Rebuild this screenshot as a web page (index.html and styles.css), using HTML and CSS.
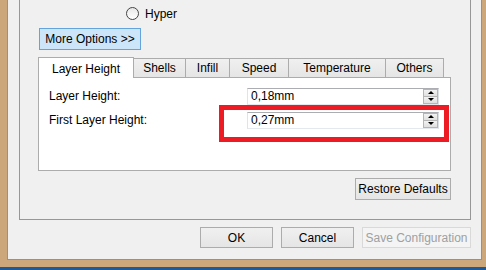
FILE: index.html
```html
<!DOCTYPE html>
<html>
<head>
<meta charset="utf-8">
<link rel="stylesheet" href="styles.css">
</head>
<body>
<div class="frame">
  <div class="client">
    <div class="group">
      <div class="radio-row">
        <span class="radio"></span>
        <span class="radio-label">Hyper</span>
      </div>
      <div class="more-row">
        <button class="btn btn-focus">More Options &gt;&gt;</button>
      </div>
      <div class="tabs">
        <div class="tab active w1">Layer Height</div>
        <div class="tab w2">Shells</div>
        <div class="tab w3">Infill</div>
        <div class="tab w4">Speed</div>
        <div class="tab w5">Temperature</div>
        <div class="tab w6">Others</div>
      </div>
      <div class="pane">
        <div class="form">
          <label class="lbl">Layer Height:</label>
          <div class="spin">
            <span class="val">0,18mm</span>
            <span class="spin-btns"><span class="sb up"></span><span class="sb down"></span></span>
          </div>
          <label class="lbl">First Layer Height:</label>
          <div class="spin">
            <span class="val">0,27mm</span>
            <span class="spin-btns"><span class="sb up"></span><span class="sb down"></span></span>
          </div>
        </div>
        <div class="highlight"></div>
      </div>
      <div class="restore-row">
        <button class="btn restore">Restore Defaults</button>
      </div>
    </div>
    <div class="actions">
      <button class="btn b-ok">OK</button>
      <button class="btn b-cancel">Cancel</button>
      <button class="btn b-save" disabled>Save Configuration</button>
    </div>
  </div>
</div>
</body>
</html>
```
FILE: styles.css
```css
* { box-sizing: border-box; }
html, body { margin: 0; padding: 0; }
body {
  width: 486px;
  height: 270px;
  background: #1c5a9a;
  font-family: "Liberation Sans", Arial, sans-serif;
  font-size: 12px;
  color: #000;
  overflow: hidden;
}
.frame {
  height: 267px;
  background: #cba77b;
  display: flex;
  padding: 0 4px 7px 7px;
}
.client {
  flex: 1;
  background: #f0f0f0;
  border: 1px solid #b08c60;
  border-top: none;
  padding: 0 10px 0 11px;
  display: flex;
  flex-direction: column;
}
.group {
  height: 220px;
  border: 1px solid #979797;
  border-top: none;
  padding: 7px 19px 0 18px;
  display: flex;
  flex-direction: column;
}
.radio-row {
  height: 13px;
  display: flex;
  align-items: center;
  margin-left: 88px;
}
.radio {
  width: 13px;
  height: 13px;
  border-radius: 50%;
  border: 1px solid #444;
  background: linear-gradient(#e8e8e8, #ffffff);
}
.radio-label {
  margin-left: 6px;
  line-height: 13px;
  position: relative;
  top: 1px;
}
.more-row {
  margin-top: 8px;
  height: 22px;
  display: flex;
}
.btn {
  font-family: "Liberation Sans", Arial, sans-serif;
  font-size: 12px;
  color: #000;
  border: 1px solid #acacac;
  background: linear-gradient(#f0f0f0, #e5e5e5);
  padding: 0;
  margin: 0;
  height: 21px;
  line-height: 18px;
  text-align: center;
}
.btn-focus {
  margin-left: 1px;
  width: 102px;
  height: 22px;
  background: #cde5f8;
  border-color: #63a4dc;
}
.tabs {
  margin-top: 7px;
  height: 20px;
  display: flex;
  align-items: flex-end;
  position: relative;
  z-index: 1;
}
.tab {
  height: 19px;
  border: 1px solid #acacac;
  border-bottom: none;
  background: linear-gradient(#f0f0f0, #e5e5e5);
  margin-left: -1px;
  text-align: center;
  line-height: 18px;
}
.tab.active {
  margin-left: 0;
  height: 21px;
  margin-bottom: -1px;
  background: #fff;
  line-height: 22px;
  position: relative;
  z-index: 2;
}
.w1 { width: 96px; }
.w2 { width: 53px; }
.w3 { width: 45px; }
.w4 { width: 60px; }
.w5 { width: 98px; }
.w6 { width: 59px; }
.pane {
  height: 94px;
  background: #fff;
  border: 1px solid #acacac;
  padding: 10px 0 0 10px;
  position: relative;
}
.form {
  display: grid;
  grid-template-columns: 198px 192px;
  grid-auto-rows: 17px;
  row-gap: 7px;
  align-items: center;
}
.lbl { line-height: 17px; }
.spin {
  height: 17px;
  border: 1px solid #abadb3;
  border-color: #abadb3 #dbdfe6 #e3e9ef #e2e3ea;
  display: flex;
  align-items: center;
  padding-left: 3px;
  position: relative;
}
.val { flex: 1; line-height: 15px; }
.spin-btns {
  width: 15px;
  height: 15px;
  margin-right: 0;
  display: flex;
  flex-direction: column;
}
.sb {
  flex: 1;
  background: linear-gradient(#f2f2f2, #e0e0e0);
  border: 1px solid #b5b5b5;
  position: relative;
}
.sb.down { border-top: none; }
.sb::after {
  content: "";
  position: absolute;
  left: 4px;
  top: 2px;
  border-left: 3px solid transparent;
  border-right: 3px solid transparent;
}
.sb.up::after { border-bottom: 3px solid #000; top: 1px; }
.sb.down::after { border-top: 3px solid #000; top: 1px; }
.highlight {
  position: absolute;
  left: 180px;
  top: 27px;
  width: 230px;
  height: 37px;
  border: 5px solid #ed1c24;
}
.restore-row {
  margin-top: 7px;
  display: flex;
  justify-content: flex-end;
}
.restore {
  width: 96px;
  height: 22px;
}
.actions {
  margin-top: 7px;
  display: flex;
  justify-content: flex-end;
  gap: 8px;
}
.b-ok, .b-cancel { width: 73px; }
.b-save {
  width: 109px;
  color: #a0a0a0;
  border-color: #d9d9d9;
  background: #f4f4f4;
}
```
